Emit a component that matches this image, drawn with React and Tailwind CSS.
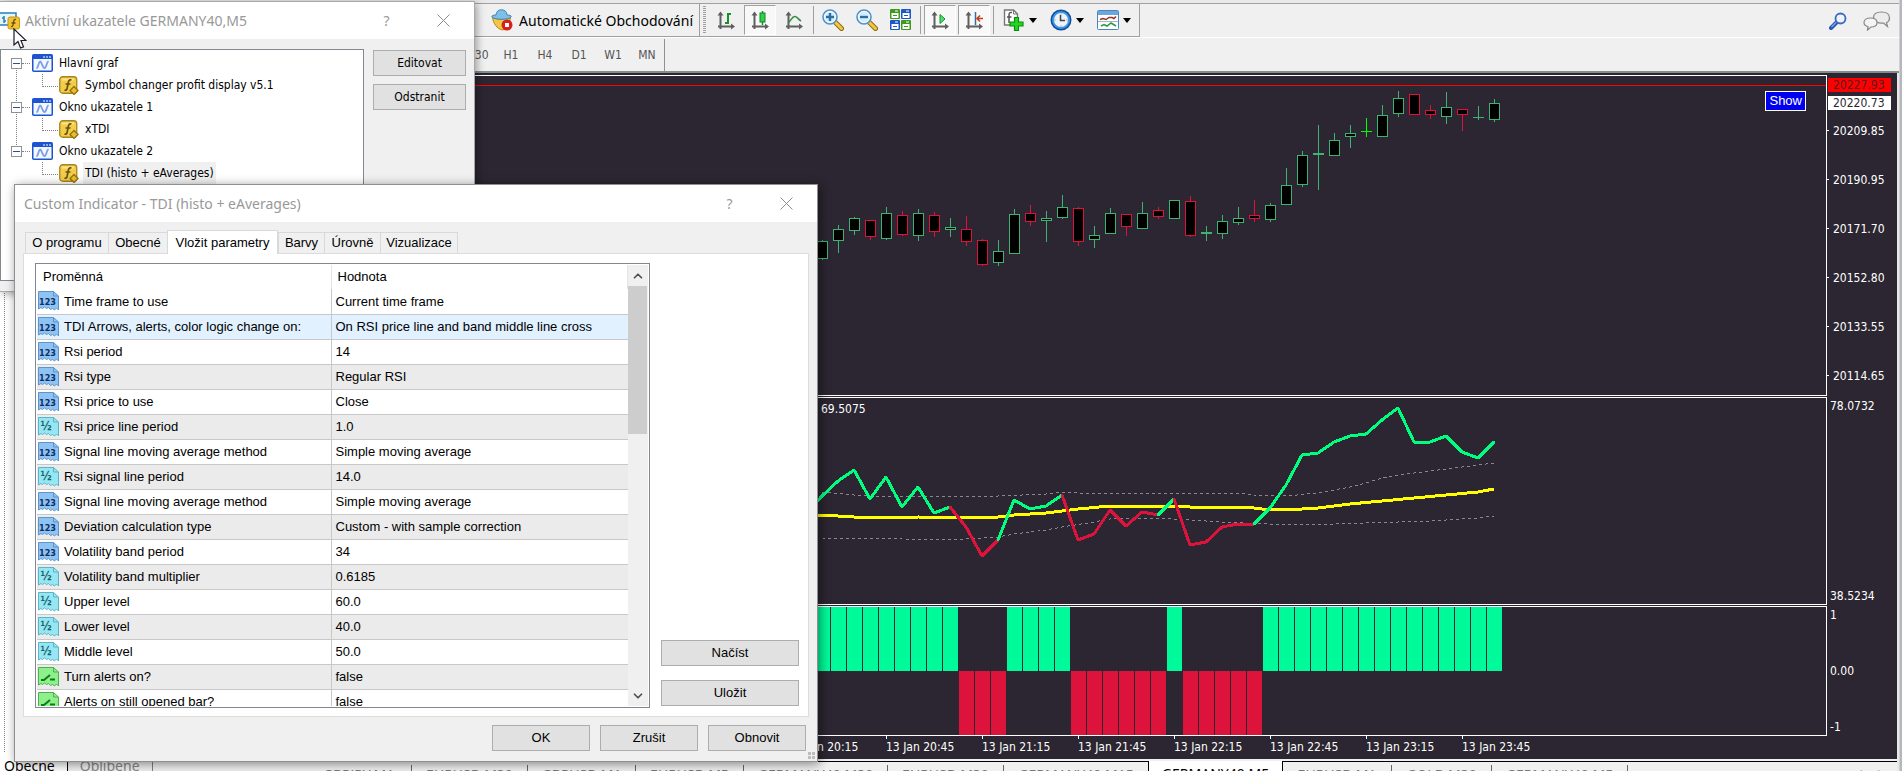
import { ChevronDown, ChevronUp } from "lucide-react";

const GREEN = "#3cb371";
const RED = "#dc143c";
const LIME = "#00ff00";

// bars are 16px apart, first visible one is centred here
const FIRST_BAR = 516;
const BAR_STEP = 16;
const barX = (i) => FIRST_BAR + i * BAR_STEP;

// [high, body top, body bottom, low, colour]
const candles = [
  [164, 165, 183, 184, GREEN],
  [149, 153, 165, 177, GREEN],
  [141, 142, 155, 159, GREEN],
  [144, 144, 161, 164, RED],
  [131, 137, 163, 164, GREEN],
  [135, 139, 159, 160, RED],
  [133, 137, 160, 165, GREEN],
  [136, 139, 156, 161, RED],
  [142, 151, 154, 161, GREEN],
  [140, 153, 166, 170, RED],
  [163, 164, 189, 190, RED],
  [164, 175, 187, 190, GREEN],
  [133, 138, 178, 178, GREEN],
  [129, 137, 146, 150, RED],
  [135, 142, 145, 166, GREEN],
  [119, 131, 142, 143, GREEN],
  [131, 132, 166, 170, RED],
  [150, 159, 164, 172, GREEN],
  [132, 137, 158, 158, GREEN],
  [138, 138, 151, 160, RED],
  [126, 137, 153, 153, GREEN],
  [131, 134, 141, 143, RED],
  [124, 124, 143, 143, GREEN],
  [120, 125, 160, 161, RED],
  [150, 156, 158, 165, GREEN],
  [139, 145, 158, 163, GREEN],
  [131, 142, 147, 149, GREEN],
  [124, 139, 143, 146, RED],
  [127, 129, 144, 146, GREEN],
  [92, 109, 129, 129, GREEN],
  [75, 79, 109, 111, GREEN],
  [49, 77, 79, 114, GREEN],
  [57, 64, 80, 80, GREEN],
  [49, 57, 61, 72, GREEN],
  [42, 55, 56, 61, LIME],
  [29, 39, 61, 61, GREEN],
  [15, 22, 38, 41, GREEN],
  [18, 18, 39, 39, RED],
  [29, 34, 39, 43, RED],
  [16, 31, 41, 48, GREEN],
  [33, 33, 39, 55, RED],
  [30, 41, 42, 44, GREEN],
  [23, 27, 44, 46, GREEN],
];

const rsi = [
  98, 83, 72, 101, 79, 109, 89, 115, 109, 129, 158, 142, 102, 111, 108, 97,
  142, 136, 112, 128, 114, 117, 101, 147, 144, 129, 126, 126, 110, 87, 57, 55,
  44, 38, 36, 22, 10, 44, 44, 38, 54, 60, 44,
];

// + = bullish bar, - = bearish bar
const trend = "+++++++++---++++------+-----+++++++++++++++";

const middleLine = [
  [-1, 117], [0, 117], [2, 119], [4, 119], [5, 120], [6, 119], [10, 120],
  [11, 119], [12, 117], [14, 115], [15, 113], [16, 111], [18, 108], [22, 108],
  [23, 109], [25, 109], [27, 110], [28, 112], [30, 111], [31, 110], [33, 106],
  [35, 103], [37, 100], [39, 97], [41, 94], [42, 91],
];

const upperBand = [
  [0, 94], [2, 97], [3, 98], [11, 98], [14, 96], [15, 94], [16, 95], [26, 95],
  [27, 97], [29, 98], [31, 95], [33, 89], [34, 85], [35, 80], [36, 77],
  [38, 73], [39, 71], [41, 67], [42, 65],
];

const lowerBand = [
  [0, 140], [5, 141], [9, 141], [11, 139], [12, 136], [14, 132], [15, 129],
  [17, 124], [18, 121], [20, 120], [22, 121], [23, 122], [25, 124], [28, 126],
  [32, 126], [36, 124], [38, 123], [40, 121], [41, 120], [42, 118],
];

const toPoints = (pts) => pts.map(([i, y]) => `${barX(i)},${y}`).join(" ");

const params = [
  ["int", "Time frame to use", "Current time frame"],
  ["int", "TDI Arrows, alerts, color logic change on:", "On RSI price line and band middle line cross"],
  ["int", "Rsi period", "14"],
  ["int", "Rsi type", "Regular RSI"],
  ["int", "Rsi price to use", "Close"],
  ["double", "Rsi price line period", "1.0"],
  ["int", "Signal line moving average method", "Simple moving average"],
  ["double", "Rsi signal line period", "14.0"],
  ["int", "Signal line moving average method", "Simple moving average"],
  ["int", "Deviation calculation type", "Custom - with sample correction"],
  ["int", "Volatility band period", "34"],
  ["double", "Volatility band multiplier", "0.6185"],
  ["double", "Upper level", "60.0"],
  ["double", "Lower level", "40.0"],
  ["double", "Middle level", "50.0"],
  ["bool", "Turn alerts on?", "false"],
  ["bool", "Alerts on still opened bar?", "false"],
];

const tree = [
  ["Hlavní graf", "Symbol changer profit display v5.1"],
  ["Okno ukazatele 1", "xTDI"],
  ["Okno ukazatele 2", "TDI (histo + eAverages)"],
];

const chartTabs = [
  ["GBPJPY,M1", "w-[106px]"],
  ["EURUSD,M30", "w-[116px]"],
  ["GBPUSD,M1", "w-[108px]"],
  ["EURUSD,M5", "w-[108px]"],
  ["GERMANY40,M30", "w-[144px]"],
  ["EURUSD,M30", "w-[116px]"],
  ["GERMANY40,M15", "w-[144px]"],
  ["GERMANY40,M5", "w-[135px]"],
  ["EURUSD,M1", "w-[109px]"],
  ["GOLD,M30", "w-[100px]"],
  ["GERMANY40,M5", "w-[136px]"],
];

/* ── Icons ── */

function AxisIcon({ children }) {
  return (
    <svg width="18" height="19" viewBox="0 0 18 19" fill="none">
      <path d="M3.500 18V2M1 15.500h15" stroke="#5f5f5f" strokeWidth="2" />
      <path d="M.5 4.500 3.500.5l3 4zM14 12.500l4 3-4 3z" fill="#5f5f5f" />
      {children}
    </svg>
  );
}

function ZoomIcon({ plus }) {
  return (
    <svg width="22" height="22" viewBox="0 0 22 22" fill="none">
      <path d="m13 13 6.500 6.500" stroke="#8a6a10" strokeWidth="5" strokeLinecap="round" />
      <path d="m13 13 6.500 6.500" stroke="#f2c840" strokeWidth="3" strokeLinecap="round" />
      <circle cx="8" cy="8" r="7" fill="#d6ecfb" stroke="#4f93cf" strokeWidth="1.600" />
      <circle cx="8" cy="8" r="5.500" stroke="#f4fbff" />
      <path d={plus ? "M4 8h8M8 4v8" : "M4 8h8"} stroke="#2d6f9f" strokeWidth="2.400" />
    </svg>
  );
}

function TileIcon() {
  const tiles = [
    [0, 0, "#3f9a1c"],
    [11, 0, "#1f55c4"],
    [0, 11, "#1f55c4"],
    [11, 11, "#3f9a1c"],
  ];
  return (
    <svg width="22" height="22" viewBox="0 0 22 22">
      {tiles.map(([x, y, c]) => (
        <g key={`${x}-${y}`}>
          <rect x={x} y={y} width="10" height="10" rx="1" fill={c} />
          <rect x={x + 1.5} y={y + 4} width="7" height="5" fill="#fff" />
          <path d={`M${x + 3} ${y + 6.5}h4`} stroke={c} />
          <path d={`M${x + 5} ${y + 2}h3`} stroke="#fff" />
        </g>
      ))}
    </svg>
  );
}

function AddIndicatorIcon() {
  return (
    <svg width="22" height="22" viewBox="0 0 22 22" fill="none">
      <path d="M1.500 1h9l4 4v11h-13z" fill="#fdfdfd" stroke="#777" strokeWidth="1.400" />
      <path d="M10.500 1v4h4" stroke="#777" />
      <path d="M9 3.500c-2.500-.5-3 .5-3 3V14M4 8h4.500" stroke="#555" strokeWidth="1.500" />
      <path
        d="M11.500 8.500h4v4.500H20v4h-4.500v4.500h-4V17H7v-4h4.500z"
        fill="#22d622"
        stroke="#0c8d12"
        strokeWidth="1.200"
      />
    </svg>
  );
}

function ClockIcon() {
  return (
    <svg width="22" height="22" viewBox="0 0 22 22" fill="none">
      <circle cx="11" cy="11" r="10.500" fill="#0e4f9e" />
      <circle cx="11" cy="11" r="9" fill="#3f96e4" />
      <circle cx="11" cy="11" r="7" fill="#eef3f8" />
      <path d="M10.500 6v5.500h4.500" stroke="#444" strokeWidth="1.500" />
      <path d="M11 4.500v1M11 16.500v1M4.500 11h1M16.500 11h1" stroke="#888" />
    </svg>
  );
}

function TemplateIcon() {
  return (
    <svg width="22" height="20" viewBox="0 0 22 20" fill="none">
      <rect x=".5" y=".5" width="21" height="19" rx="1" fill="#fff" stroke="#4a84bd" />
      <rect x="1" y="1" width="20" height="4" fill="#6ba7dc" />
      <path d="M3 9.500l3-1 3 1 3-2h3l2 1 2-2" stroke="#9a3324" strokeWidth="1.500" />
      <path d="M1 11.500h20" stroke="#9db9d6" />
      <path d="m4 16 3-1.500 3 1.500 4-3 5 3" stroke="#2c9a3a" strokeWidth="1.500" />
    </svg>
  );
}

function ExpertIcon() {
  return (
    <svg width="22" height="22" viewBox="0 0 22 22" fill="none">
      <path d="M1.500 8c3 3 15 3 18 0-.5 6-4 12-8 13C6 20 2 14 1.500 8z" fill="#f3c64a" stroke="#b08517" />
      <path d="M5 6c0-7 11-7 11 0 3 0 5 1 4 2-3 3-16 3-19 0-1-1 1-2 4-2z" fill="#7cc0ea" stroke="#3f87b8" />
      <circle cx="16" cy="16" r="5.500" fill="#d8201c" />
      <rect x="14" y="14" width="4" height="4" fill="#fff" />
    </svg>
  );
}

function SearchIcon() {
  return (
    <svg width="18" height="18" viewBox="0 0 18 18" fill="none">
      <path d="m8 10-6 6" stroke="#2a56b0" strokeWidth="4" strokeLinecap="round" />
      <path d="m7.500 10-5 5" stroke="#7ea6ea" strokeWidth="1.200" />
      <circle cx="11.500" cy="6.500" r="5" fill="#eef3fb" stroke="#3d68bd" strokeWidth="1.800" />
    </svg>
  );
}

function ChatIcon() {
  return (
    <svg width="28" height="20" viewBox="0 0 28 20" fill="none">
      <path
        d="M18.500 1C22.600 1 26.500 2.500 26.500 7c0 2.500-1.500 4-3 4.500l1 4-4-3.500c-5 .5-10-1-10-5.500 0-4 4-5.500 8-5.500z"
        fill="#ececec"
        stroke="#888"
        strokeWidth="1.200"
      />
      <path
        d="M7.500 7c4 0 6.500 1.500 6.500 4.500S11.500 16 8 16l-3.500 3 .5-3.500C2.500 15 1 13.500 1 11.500 1 8.500 3.500 7 7.500 7z"
        fill="#f4f4f4"
        stroke="#888"
        strokeWidth="1.200"
      />
    </svg>
  );
}

function WindowIcon() {
  return (
    <svg width="21" height="18" viewBox="0 0 21 18" fill="none" className="shrink-0">
      <rect x=".75" y=".75" width="19.500" height="16.500" rx="1" fill="#f3f8ff" stroke="#1c55cf" strokeWidth="1.500" />
      <rect x="1" y="1" width="19" height="4" fill="#1c55cf" />
      <path d="M11 3h2M14 3h2M17 3h2" stroke="#fff" />
      <path d="M4.500 14.500c2-1 2-6.500 3.500-7s2.500 6.500 4.500 6.500 2-6 4-7" stroke="#7d9de6" strokeWidth="1.800" />
    </svg>
  );
}

function FxIcon() {
  return (
    <svg width="20" height="19" viewBox="0 0 20 19" fill="none" className="shrink-0">
      <rect x=".75" y=".75" width="17" height="16.500" rx="3" fill="#f1cd4b" stroke="#a98519" strokeWidth="1.300" />
      <path d="M3 3.500h12" stroke="#f9e48f" strokeWidth="2" />
      <path d="M12.500 4c-2.500-.8-3 .8-3.500 4l-.8 4c-.4 2-1.200 2.500-2.700 2M6.500 8h5" stroke="#6b520c" strokeWidth="1.700" />
      <path d="m15 10.500 4 4-4 4-4-4z" fill="#e9bd2f" stroke="#94730f" strokeWidth="1.300" />
    </svg>
  );
}

function IndicatorsIcon() {
  return (
    <svg width="20" height="18" viewBox="0 0 20 18" fill="none" className="shrink-0">
      <path d="M-4 1h20v12H-4z" fill="#e6f4fc" stroke="#2c7fb5" strokeWidth="1.500" />
      <path d="M4 4v7M2 6h2M4 9h2" stroke="#2c7fb5" strokeWidth="1.500" />
      <rect x="8" y="5" width="11.500" height="12" rx="2" fill="#f1c232" stroke="#c5941a" />
      <path d="M16 7.500c-2-.5-2 .5-2.500 3s-.5 4.500-2.500 4M11.500 11h4" stroke="#6b4e0c" strokeWidth="1.300" />
    </svg>
  );
}

const iconColors = {
  int: ["#8fc3f2", "#5b94cf", "#0d2f66"],
  double: ["#97e6f2", "#58b5c9", "#13656f"],
  bool: ["#8df08a", "#4fae4f", "#0f7a18"],
};

function ParamIcon({ type }) {
  const [fill, edge, ink] = iconColors[type];
  return (
    <svg width="21" height="20" viewBox="0 0 21 20" fill="none">
      <path
        d="M.5.5h15l5 4.500v14l-2-2-2 2-2-1.500-2 1-2-2-2 1-2-1.500-2 1.500-1.500-1L.5 18z"
        fill={fill}
        stroke={edge}
      />
      <path d="M15.500.5V5h5" stroke={edge} />
      {type === "bool" ? (
        <path d="M3 13h3l6-5M12 12.500h5" stroke={ink} strokeWidth="2" />
      ) : (
        <text
          x={type === "int" ? 9.5 : 8}
          y={type === "int" ? 14 : 13}
          textAnchor="middle"
          fill={ink}
          fontSize={type === "int" ? 9 : 12}
          fontWeight="700"
          fontFamily="DejaVu Sans Condensed, sans-serif"
        >
          {type === "int" ? "123" : "½"}
        </text>
      )}
    </svg>
  );
}

function CloseIcon() {
  return (
    <svg width="13" height="13" viewBox="0 0 13 13" stroke="#8c8c8c">
      <path d="m.5.5 12 12M12.500.5l-12 12" />
    </svg>
  );
}

/* ── Toolbars ── */

function Caret() {
  return (
    <svg width="8" height="5" viewBox="0 0 8 5">
      <path d="M0 0h8L4 5z" fill="#000" />
    </svg>
  );
}

function Separator() {
  return <div className="mx-px h-7 w-px bg-[#a0a0a0]" />;
}

function ToolButton({ label, pressed, children }) {
  return (
    <button
      aria-label={label}
      className={
        pressed
          ? "flex h-[30px] w-8 items-center justify-center border border-t-[#a0a0a0] border-l-[#a0a0a0] border-r-white border-b-white bg-[#f8f8f8]"
          : "flex h-[30px] w-8 items-center justify-center"
      }
    >
      {children}
    </button>
  );
}

function MenuButton({ label, children }) {
  return (
    <button aria-label={label} className="flex h-[30px] w-[45px] items-center justify-center gap-1">
      {children}
      <Caret />
    </button>
  );
}

function Toolbars() {
  return (
    <header className="border-b-2 border-[#858b88] bg-[#f0f0f0]">
      <div className="h-[3px] bg-[#e9e9e9]" />
      <div className="flex h-[34px] items-center justify-between border-t border-[#a0a0a0]">
        <div className="flex h-full items-center border-r border-b border-[#a0a0a0] pr-[3px]">
          <div className="flex h-full w-[700px] items-center justify-end border-r border-[#a0a0a0] pr-[6px]">
            <button className="flex items-center gap-[6px] font-['Noto_Sans'] text-[14px] whitespace-nowrap">
              <ExpertIcon />
              Automatické Obchodování
            </button>
          </div>
          <div className="mx-[3px] h-7 w-[3px] bg-[repeating-linear-gradient(#a0a0a0_0_1px,#f0f0f0_1px_2px)]" />
          <div className="flex items-center gap-[2px] pl-px">
            <ToolButton label="Sloupcový graf">
              <AxisIcon>
                <path d="M8 12h3V3h3" stroke="#17902a" strokeWidth="2" />
              </AxisIcon>
            </ToolButton>
            <ToolButton label="Svíčkový graf" pressed>
              <AxisIcon>
                <path d="M11.500 0v14" stroke="#17902a" strokeWidth="1.500" />
                <rect x="9" y="2" width="5" height="9" fill="#2fd04a" stroke="#0f8423" />
              </AxisIcon>
            </ToolButton>
            <ToolButton label="Čárový graf">
              <AxisIcon>
                <path d="M3 12c3-2 4-7 7-6.500s3 3 6 4.500" stroke="#3c8d48" strokeWidth="1.600" />
              </AxisIcon>
            </ToolButton>
            <Separator />
            <ToolButton label="Přiblížit">
              <ZoomIcon plus />
            </ToolButton>
            <ToolButton label="Oddálit">
              <ZoomIcon />
            </ToolButton>
            <ToolButton label="Dlaždice">
              <TileIcon />
            </ToolButton>
            <Separator />
            <ToolButton label="Automatický posun" pressed>
              <AxisIcon>
                <path d="M9 3.500v9l5-4.500z" fill="#4fe06a" stroke="#119529" />
              </AxisIcon>
            </ToolButton>
            <ToolButton label="Posun grafu" pressed>
              <AxisIcon>
                <path d="M10.500 1v13" stroke="#2f6fa8" strokeWidth="1.500" />
                <path d="M12 7.500h6M15 4.500l-3 3 3 3" stroke="#c43d12" strokeWidth="1.600" />
              </AxisIcon>
            </ToolButton>
            <Separator />
            <MenuButton label="Indikátory">
              <AddIndicatorIcon />
            </MenuButton>
            <MenuButton label="Časové rámce">
              <ClockIcon />
            </MenuButton>
            <MenuButton label="Šablony">
              <TemplateIcon />
            </MenuButton>
          </div>
        </div>
        <div className="flex items-center gap-4 pr-2">
          <button aria-label="Hledat">
            <SearchIcon />
          </button>
          <button aria-label="Chat">
            <ChatIcon />
          </button>
        </div>
      </div>
      <div className="flex h-[34px] border-t border-white pt-px">
        <div className="flex w-[665px] items-center justify-end border-r border-[#909090] text-[12px] text-[#555]">
          {["M30", "H1", "H4", "D1", "W1", "MN"].map((p) => (
            <button key={p} className="w-[34px] text-center">
              {p}
            </button>
          ))}
        </div>
      </div>
    </header>
  );
}

/* ── Chart ── */

function Candle({ i, data }) {
  const [high, top, bottom, low, color] = data;
  const x = barX(i);
  return (
    <g shapeRendering="crispEdges">
      <rect x={x} y={high} width="1" height={low - high} fill={color} />
      <rect x={x - 5} y={top} width="11" height={bottom - top} fill={color} />
      {bottom - top > 2 && (
        <rect x={x - 4} y={top + 1} width="9" height={bottom - top - 2} fill="#000" />
      )}
    </g>
  );
}

function Chart() {
  return (
    <div className="flex min-w-0 flex-1 flex-col bg-[#2b2631] pt-[2px] text-[12px] text-white">
      {/* price */}
      <div className="flex h-[321px] shrink-0">
        <div className="relative min-w-0 flex-1 overflow-hidden border border-l-0 border-white">
          <svg className="h-full w-full">
            {candles.map((c, i) => (
              <Candle key={i} i={i} data={c} />
            ))}
            <rect y="9" width="100%" height="1" fill="#ff0000" />
          </svg>
          <button className="absolute top-[15px] right-5 h-5 border border-white bg-[#0000f0] px-[3px] font-['Liberation_Sans'] text-[13px] leading-[18px]">
            Show
          </button>
        </div>
        <div className="flex w-[70px] flex-col gap-1 pt-[3px] leading-[14px]">
          <div className="ml-px w-[63px] bg-[#ff0000] pl-[5px] text-[#5a1a20]">20227.93</div>
          <div className="ml-px w-[63px] bg-white pl-[5px] text-[#2b2631]">20220.73</div>
          <div className="-mt-2">
            {["20209.85", "20190.95", "20171.70", "20152.80", "20133.55", "20114.65"].map((p) => (
              <div key={p} className="flex h-[49px] items-center gap-1">
                <span className="h-px w-[2px] bg-white" />
                {p}
              </div>
            ))}
          </div>
        </div>
      </div>

      {/* oscillator */}
      <div className="mt-px flex h-[208px] shrink-0">
        <div className="relative min-w-0 flex-1 overflow-hidden border border-l-0 border-white">
          <svg className="h-full w-full" fill="none" shapeRendering="crispEdges">
            <polyline points={toPoints(upperBand)} stroke="#8b8790" strokeDasharray="3 3" />
            <polyline points={toPoints(lowerBand)} stroke="#8b8790" strokeDasharray="3 3" />
            <polyline points={toPoints(middleLine)} stroke="#ffff00" strokeWidth="3" />
            <path d={`M${barX(-1)} 115L${barX(0)} 98`} stroke="#00ff7f" strokeWidth="3" />
            {rsi.slice(1).map((y, i) => (
              <path
                key={i}
                d={`M${barX(i)} ${rsi[i]}L${barX(i + 1)} ${y}`}
                stroke={trend[i + 1] === "+" ? "#00ff7f" : RED}
                strokeWidth="3"
                strokeLinecap="round"
              />
            ))}
          </svg>
          <span className="absolute top-[2px] left-[515px]">69.5075</span>
        </div>
        <div className="flex w-[70px] flex-col justify-between pl-[3px]">
          <span>78.0732</span>
          <span>38.5234</span>
        </div>
      </div>

      {/* histogram */}
      <div className="mt-px flex h-[130px] shrink-0">
        <div className="min-w-0 flex-1 overflow-hidden border border-l-0 border-white">
          <svg className="h-full w-full" shapeRendering="crispEdges">
            {[...trend].map((t, i) => (
              <rect
                key={i}
                x={barX(i) - 7}
                y={t === "+" ? 0 : 64}
                width="15"
                height="64"
                fill={t === "+" ? "#00fa9a" : RED}
              />
            ))}
          </svg>
        </div>
        <div className="flex w-[70px] flex-col justify-between pl-[3px]">
          <span>1</span>
          <span>0.00</span>
          <span>-1</span>
        </div>
      </div>

      {/* time axis */}
      <div className="flex h-[23px] shrink-0 overflow-hidden pl-[484px]">
        {["20:15", "20:45", "21:15", "21:45", "22:15", "22:45", "23:15", "23:45"].map((t) => (
          <div key={t} className="w-24 shrink-0 whitespace-nowrap">
            <div className="h-[3px] w-px bg-white" />
            <div className="leading-4">13 Jan {t}</div>
          </div>
        ))}
      </div>
      <div className="h-[3px] shrink-0 border-b border-black bg-[#f0f0f0]" />
      <ChartTabs />
    </div>
  );
}

function ChartTabs() {
  return (
    <nav className="flex h-6 shrink-0 bg-[#f0f0f0] font-['Noto_Sans'] text-[14px] leading-5 text-[#777]">
      {chartTabs.map(([name, width], i) => (
        <button
          key={i}
          className={
            i === 7
              ? `${width} -mt-px h-6 shrink-0 border-r border-l border-black bg-white pt-[2px] text-black`
              : `${width} h-6 shrink-0 pt-px`
          }
        >
          <span className={i === 6 || i === 7 ? "block" : "block border-r border-[#666]"}>{name}</span>
        </button>
      ))}
      <div className="ml-auto flex gap-4 pr-3 text-[#a0a0a0]">
        <span>◂</span>
        <span>▸</span>
      </div>
    </nav>
  );
}

function Navigator() {
  return (
    <aside className="flex w-[307px] shrink-0 flex-col border-r border-[#808080] bg-[#f0f0f0] -mr-px">
      <div className="h-[679px] shrink-0 bg-white pl-1">
        <div className="h-full border-l border-dotted border-[#808080]" />
      </div>
      <div className="flex shrink-0 font-['Noto_Sans'] text-[14px] leading-7">
        <button className="border-r border-black bg-white pr-3 pl-1">Obecné</button>
        <button className="border-r border-[#808080] px-3 text-[#888]">Oblíbené</button>
      </div>
    </aside>
  );
}

/* ── Dialogs ── */

function TitleBar({ icon, title }) {
  return (
    <div className="flex h-[37px] items-center bg-white font-['Noto_Sans'] text-[14px] text-[#999]">
      {icon}
      <h2 className="flex-1 whitespace-nowrap">{title}</h2>
      <button aria-label="Nápověda" className="w-[57px] text-center">
        ?
      </button>
      <button aria-label="Zavřít" className="mr-[2px] flex w-[57px] justify-center">
        <CloseIcon />
      </button>
    </div>
  );
}

function DialogButton({ children, className }) {
  return (
    <button className={`h-[26px] border border-[#adadad] bg-[#e1e1e1] text-center ${className}`}>
      {children}
    </button>
  );
}

function TreeGroup({ name, child, last }) {
  return (
    <li className="relative">
      {!last && <span className="absolute top-4 left-[15px] h-[37px] border-l border-dotted border-[#808080]" />}
      <div className="flex h-[22px] items-center pl-[10px]">
        <button
          aria-label="Sbalit"
          className="flex size-[11px] items-center justify-center border border-[#919191] bg-white"
        >
          <span className="h-px w-[7px] bg-[#2b4f9c]" />
        </button>
        <span className="mr-[2px] w-2 border-t border-dotted border-[#808080]" />
        <WindowIcon />
        <span className="pl-[6px]">{name}</span>
      </div>
      <div className="flex h-[22px] items-center pl-[41px]">
        <span className="mb-[9px] h-[13px] w-4 border-b border-l border-dotted border-[#808080]" />
        <span className="pl-px">
          <FxIcon />
        </span>
        <span className={last ? "ml-1 bg-[#f0f0f0] px-[2px] leading-[22px]" : "ml-1 px-[2px]"}>{child}</span>
      </div>
    </li>
  );
}

function IndicatorsDialog() {
  return (
    <section className="absolute top-px left-0 h-[291px] w-[475px] border border-l-0 border-[#a8a8a8] bg-[#f0f0f0] text-[12px] shadow-[2px_2px_8px_rgba(0,0,0,0.350)]">
      <TitleBar
        icon={
          <span className="mr-[5px]">
            <IndicatorsIcon />
          </span>
        }
        title="Aktivní ukazatele GERMANY40,M5"
      />
      <div className="flex gap-[9px] pt-[10px]">
        <ul className="h-[232px] w-[364px] border border-[#828790] bg-white pt-[2px]">
          {tree.map(([name, child], i) => (
            <TreeGroup key={name} name={name} child={child} last={i === 2} />
          ))}
        </ul>
        <div className="flex flex-col gap-2 pt-px">
          <DialogButton className="w-[93px]">Editovat</DialogButton>
          <DialogButton className="w-[93px]">Odstranit</DialogButton>
        </div>
      </div>
    </section>
  );
}

const dialogTabs = [
  ["O programu", "w-[83px]"],
  ["Obecné", "w-[59px]"],
  ["Vložit parametry", "w-[111px]"],
  ["Barvy", "w-[46px]"],
  ["Úrovně", "w-[56px]"],
  ["Vizualizace", "w-[78px]"],
];

function ParamTable() {
  return (
    <div className="flex h-[445px] w-[615px] border border-[#828790] bg-white p-px">
      <div className="min-w-0 flex-1 overflow-hidden">
        <table className="w-full table-fixed border-collapse text-left">
          <thead>
            <tr className="h-6">
              <th className="w-[294px] border-r border-[#e5e5e5] pl-[6px] font-normal">Proměnná</th>
              <th className="border-r border-[#e5e5e5] pl-[6px] font-normal">Hodnota</th>
            </tr>
          </thead>
          <tbody>
            {params.map(([type, name, value], i) => (
              <tr
                key={i}
                className={
                  i === 1
                    ? "h-[25px] border-b border-[#c8c8c8] bg-[#e1f1ff]"
                    : "h-[25px] border-b border-[#c8c8c8] odd:bg-white even:bg-[#ebebeb]"
                }
              >
                <td className="border-r border-[#c8c8c8] p-0 pl-px">
                  <div className="flex items-center gap-[5px] whitespace-nowrap">
                    <ParamIcon type={type} />
                    {name}
                  </div>
                </td>
                <td className="p-0 pl-1 whitespace-nowrap">{value}</td>
              </tr>
            ))}
          </tbody>
        </table>
      </div>
      <div className="flex w-5 flex-col bg-[#f0f0f0]">
        <button aria-label="Nahoru" className="flex h-[21px] items-center justify-center">
          <ChevronUp size={14} strokeWidth={3} color="#505050" />
        </button>
        <div className="h-[148px] w-[19px] bg-[#cdcdcd]" />
        <button aria-label="Dolů" className="mt-auto flex h-[21px] items-center justify-center">
          <ChevronDown size={14} strokeWidth={3} color="#505050" />
        </button>
      </div>
    </div>
  );
}

function ParamsDialog() {
  return (
    <section className="absolute top-[184px] left-[14px] flex w-[804px] flex-col border border-[#8f8f8f] bg-[#f0f0f0] font-['Liberation_Sans'] text-[13px] shadow-[2px_2px_10px_rgba(0,0,0,0.450)]">
      <TitleBar icon={<span className="w-[9px]" />} title="Custom Indicator - TDI (histo + eAverages)" />
      <div className="px-2 pt-2">
        <div role="tablist" className="flex items-end pl-[2px]">
          {dialogTabs.map(([name, width], i) => (
            <button
              key={name}
              role="tab"
              aria-selected={i === 2}
              className={
                i === 2
                  ? `${width} relative z-10 -mb-px h-6 border border-b-0 border-[#d9d9d9] bg-white`
                  : `${width} h-[21px] border border-r-0 border-b-0 border-[#d9d9d9] last:border-r`
              }
            >
              {name}
            </button>
          ))}
        </div>
        <div className="flex border border-[#dcdcdc] bg-white px-[9px] pt-[9px] pb-2 pl-[11px]">
          <ParamTable />
          <div className="flex flex-1 flex-col justify-end gap-[14px] pb-[2px] pl-[11px]">
            <DialogButton className="w-full">Načíst</DialogButton>
            <DialogButton className="w-full">Uložit</DialogButton>
          </div>
        </div>
      </div>
      <div className="flex justify-end gap-[10px] pt-2 pr-[11px] pb-[10px]">
        <DialogButton className="w-[98px]">OK</DialogButton>
        <DialogButton className="w-[98px]">Zrušit</DialogButton>
        <DialogButton className="w-[98px]">Obnovit</DialogButton>
      </div>
      <div className="absolute right-[2px] bottom-[2px] grid grid-cols-2 gap-px">
        {[0, 1, 2, 3].map((n) => (
          <span key={n} className="size-[3px] bg-[#bdbdbd]" />
        ))}
      </div>
    </section>
  );
}

function Cursor() {
  return (
    <svg className="absolute top-[28px] left-[13px]" width="14" height="21" viewBox="0 0 14 21">
      <path d="M1 1v16l4-3.500L7.500 20l3-1.200L8 12.500h5z" fill="#fff" stroke="#1a1a2a" strokeWidth="1.200" />
    </svg>
  );
}

export default function App() {
  return (
    <div className="relative flex h-screen overflow-hidden bg-[#f0f0f0] font-['DejaVu_Sans_Condensed'] text-black">
      <div className="flex min-w-0 flex-1 flex-col">
        <Toolbars />
        <main className="flex min-h-0 flex-1 overflow-hidden border-r-2 border-[#e8e8e8]">
          <Navigator />
          <Chart />
        </main>
      </div>
      <div className="w-[3px] border-l border-[#d0d0d0] bg-[#b4b8bc]" />
      <IndicatorsDialog />
      <ParamsDialog />
      <Cursor />
    </div>
  );
}
